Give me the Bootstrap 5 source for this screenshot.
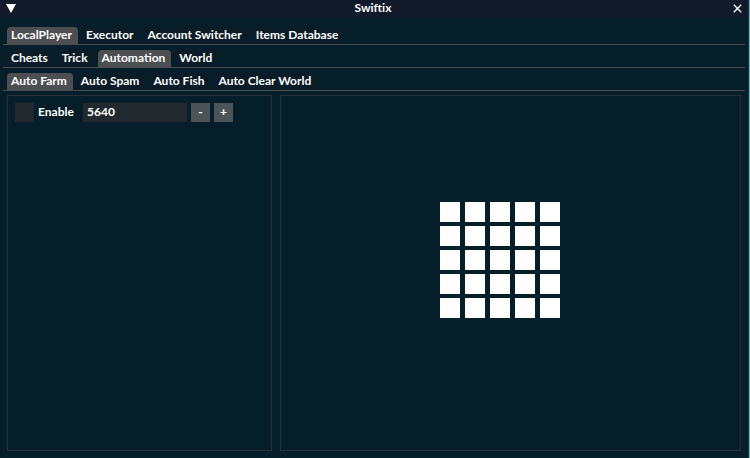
<!DOCTYPE html>
<html lang="en" data-bs-theme="dark">
<head>
<meta charset="utf-8">
<meta name="viewport" content="width=device-width, initial-scale=1">
<title>Swiftix</title>
<link href="https://cdn.jsdelivr.net/npm/bootstrap@5.3.0/dist/css/bootstrap.min.css" rel="stylesheet">
<style>
  body { background: #061d2a; color: #fff; font: 700 12px/15px Lato, "Open Sans", sans-serif; }
  .app-window { border-right: 1px solid #5cb8cc; box-shadow: inset -1px 0 #302f33; }
  .title-bar { background: #101a2b; height: 17px; padding: 0 6px; margin-right: 1px; }
  .title-bar span { padding: 0 3px 2px 0; }
  .title-bar .btn { line-height: 0; }
  .tab-sets { padding: 10px 4px 0 3px; gap: 5px; }
  .tab-sets .nav-tabs { --bs-nav-tabs-border-width: 0; border-bottom: 1px solid #4c4e51; padding-left: 4px; gap: 4px; }
  .tab-sets .nav-link { --bs-nav-link-color: #fff; --bs-nav-link-hover-color: #fff; padding: 0 6px 2px 4px; margin: 0; font-size: 12px; line-height: 15px; font-weight: 700; background: #091c28; border: 0; border-radius: 4px 4px 0 0; }
  .tab-sets .nav-link.active { background: #4c4e51; color: #fff; }
  .panes { display: grid; grid-template-columns: 265fr 461fr; gap: 8px; padding: 4px 8px 7px 7px; }
  .pane { border: 1px solid #293239; }
  .options { padding: 7px; }
  .options .form-check-input { width: 19px; height: 19px; margin: 0 4px 0 0; background-color: #22292e; border: 0; border-radius: 0; }
  .options label { width: 45px; line-height: 17px; }
  .options .form-control { width: 104px; height: 19px; min-height: 0; padding: 0 4px 2px; margin-right: 4px; background: #22292e; border: 0; border-radius: 0; color: #fff; font-size: 12px; font-weight: 700; line-height: 17px; }
  .options .btn { width: 19px; height: 19px; padding: 0 0 2px; margin-right: 4px; background: #4c5458; border: 0; border-radius: 0; color: #fff; font-size: 12px; font-weight: 700; line-height: 17px; }
  .field { padding: 0 22px 26px 0; }
  .tiles { display: grid; grid-template-columns: repeat(5, 20px); gap: 4px 5px; }
  .tiles .btn { height: 20px; padding: 0; background: #fff; border: 0; border-radius: 0; }
</style>
<script src="https://cdn.jsdelivr.net/npm/bootstrap@5.3.0/dist/js/bootstrap.bundle.min.js" defer></script>
</head>
<body>
<div class="app-window d-flex flex-column min-vh-100">
  <header class="title-bar d-flex align-items-center justify-content-between">
    <button class="btn p-0 border-0" aria-label="Collapse"><svg width="10" height="9" viewBox="0 0 10 9"><path d="M0 0h10L5 9z" fill="#fff"/></svg></button>
    <span>Swiftix</span>
    <button class="btn p-0 border-0" aria-label="Close"><svg width="9" height="9" viewBox="0 0 9 9"><path d="M.8.8l7.4 7.4M8.2.8L.8 8.2" stroke="#fff" stroke-width="1.4"/></svg></button>
  </header>
  <div class="tab-sets d-flex flex-column">
    <nav class="nav nav-tabs" aria-label="Sections">
      <a class="nav-link active" href="#">LocalPlayer</a><a class="nav-link" href="#">Executor</a><a class="nav-link" href="#">Account Switcher</a><a class="nav-link" href="#">Items Database</a>
    </nav>
    <nav class="nav nav-tabs" aria-label="LocalPlayer">
      <a class="nav-link" href="#">Cheats</a><a class="nav-link" href="#">Trick</a><a class="nav-link active" href="#">Automation</a><a class="nav-link" href="#">World</a>
    </nav>
    <nav class="nav nav-tabs" aria-label="Automation">
      <a class="nav-link active" href="#">Auto Farm</a><a class="nav-link" href="#">Auto Spam</a><a class="nav-link" href="#">Auto Fish</a><a class="nav-link" href="#">Auto Clear World</a>
    </nav>
  </div>
  <main class="panes flex-grow-1">
    <section class="pane options d-flex align-items-start">
      <input class="form-check-input" type="checkbox" id="enable">
      <label for="enable">Enable</label>
      <input class="form-control" type="text" value="5640" aria-label="Delay">
      <button class="btn">-</button>
      <button class="btn">+</button>
    </section>
    <section class="pane field d-flex align-items-center justify-content-center">
      <div class="tiles">
        <button class="btn" aria-label="Tile 1"></button><button class="btn" aria-label="Tile 2"></button><button class="btn" aria-label="Tile 3"></button><button class="btn" aria-label="Tile 4"></button><button class="btn" aria-label="Tile 5"></button>
        <button class="btn" aria-label="Tile 6"></button><button class="btn" aria-label="Tile 7"></button><button class="btn" aria-label="Tile 8"></button><button class="btn" aria-label="Tile 9"></button><button class="btn" aria-label="Tile 10"></button>
        <button class="btn" aria-label="Tile 11"></button><button class="btn" aria-label="Tile 12"></button><button class="btn" aria-label="Tile 13"></button><button class="btn" aria-label="Tile 14"></button><button class="btn" aria-label="Tile 15"></button>
        <button class="btn" aria-label="Tile 16"></button><button class="btn" aria-label="Tile 17"></button><button class="btn" aria-label="Tile 18"></button><button class="btn" aria-label="Tile 19"></button><button class="btn" aria-label="Tile 20"></button>
        <button class="btn" aria-label="Tile 21"></button><button class="btn" aria-label="Tile 22"></button><button class="btn" aria-label="Tile 23"></button><button class="btn" aria-label="Tile 24"></button><button class="btn" aria-label="Tile 25"></button>
      </div>
    </section>
  </main>
</div>
</body>
</html>
